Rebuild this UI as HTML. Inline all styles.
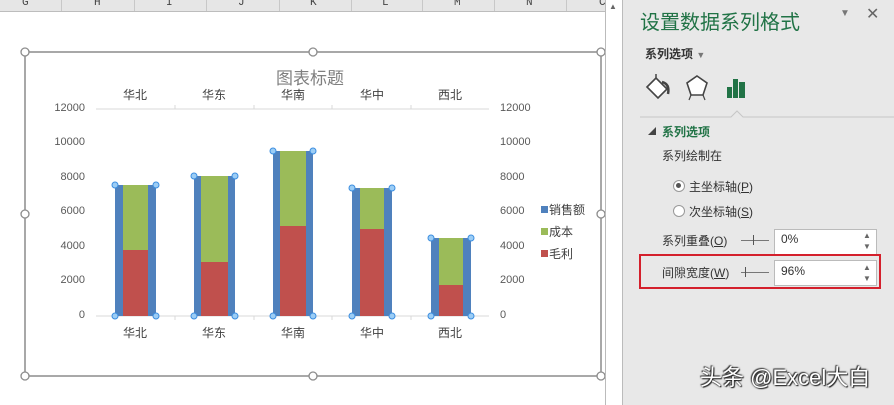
<!DOCTYPE html>
<html><head><meta charset="utf-8"><style>
body{margin:0;width:894px;height:405px;overflow:hidden;background:#fff;font-family:"Liberation Sans","Noto Sans CJK SC",sans-serif;position:relative}
.a{position:absolute;white-space:nowrap}
.hdr{position:absolute;left:0;top:0;width:605px;height:11px;background:#e6e6e6;border-bottom:1px solid #bdbdbd}
.col{position:absolute;top:-3px;font-size:11px;color:#444;font-family:"Liberation Mono",monospace}
.sep{position:absolute;top:0;width:1px;height:11px;background:#c8c8c8}
.ax{font-size:11px;color:#595959}
.cat{font-size:12px;color:#404040}
.pn{font-size:12px;color:#333}
</style></head><body>
<div class="hdr">
<div class="sep" style="left:61px"></div><div class="sep" style="left:134px"></div><div class="sep" style="left:206px"></div><div class="sep" style="left:279px"></div><div class="sep" style="left:351px"></div><div class="sep" style="left:422px"></div><div class="sep" style="left:494px"></div><div class="sep" style="left:566px"></div>
<span class="col" style="left:22px">G</span><span class="col" style="left:94px">H</span><span class="col" style="left:166px">I</span><span class="col" style="left:238px">J</span><span class="col" style="left:310px">K</span><span class="col" style="left:382px">L</span><span class="col" style="left:454px">M</span><span class="col" style="left:526px">N</span><span class="col" style="left:599px">C</span>
</div>
<div class="a" style="left:605px;top:0;width:16px;height:405px;background:#fff;border-left:1px solid #bbb;border-right:1px solid #bbb"></div>
<div class="a" style="left:609px;top:2px;font-size:8px;color:#666">▲</div>
<svg class="a" style="left:0;top:0" width="605" height="405">
<rect x="25" y="52" width="576" height="324" fill="none" stroke="#8c8c8c" stroke-width="1.5"/>
<g fill="#fff" stroke="#8c8c8c" stroke-width="1.3">
<circle cx="25" cy="52" r="4"/><circle cx="313" cy="52" r="4"/><circle cx="601" cy="52" r="4"/>
<circle cx="25" cy="214" r="4"/><circle cx="601" cy="214" r="4"/>
<circle cx="25" cy="376" r="4"/><circle cx="313" cy="376" r="4"/><circle cx="601" cy="376" r="4"/></g>
<line x1="96" y1="109" x2="489" y2="109" stroke="#d9d9d9"/>
<line x1="96" y1="316" x2="489" y2="316" stroke="#d9d9d9"/>
<g stroke="#d9d9d9"><line x1="175" y1="105" x2="175" y2="109"/><line x1="254" y1="105" x2="254" y2="109"/><line x1="332" y1="105" x2="332" y2="109"/><line x1="411" y1="105" x2="411" y2="109"/>
<line x1="175" y1="316" x2="175" y2="320"/><line x1="254" y1="316" x2="254" y2="320"/><line x1="332" y1="316" x2="332" y2="320"/><line x1="411" y1="316" x2="411" y2="320"/></g>
<g>
<rect x="115" y="185" width="41" height="131" fill="#4f81bd"/><rect x="123" y="185" width="25" height="65" fill="#9bbb59"/><rect x="123" y="250" width="25" height="66" fill="#c0504d"/>
<rect x="194" y="176" width="41" height="140" fill="#4f81bd"/><rect x="201" y="176" width="27" height="86" fill="#9bbb59"/><rect x="201" y="262" width="27" height="54" fill="#c0504d"/>
<rect x="273" y="151" width="40" height="165" fill="#4f81bd"/><rect x="280" y="151" width="26" height="75" fill="#9bbb59"/><rect x="280" y="226" width="26" height="90" fill="#c0504d"/>
<rect x="352" y="188" width="40" height="128" fill="#4f81bd"/><rect x="360" y="188" width="24" height="41" fill="#9bbb59"/><rect x="360" y="229" width="24" height="87" fill="#c0504d"/>
<rect x="431" y="238" width="40" height="78" fill="#4f81bd"/><rect x="439" y="238" width="24" height="47" fill="#9bbb59"/><rect x="439" y="285" width="24" height="31" fill="#c0504d"/>
</g>
<g fill="#9ccdf5" stroke="#3c8ee0" stroke-width="1">
<circle cx="115" cy="185" r="3"/><circle cx="156" cy="185" r="3"/><circle cx="115" cy="316" r="3"/><circle cx="156" cy="316" r="3"/>
<circle cx="194" cy="176" r="3"/><circle cx="235" cy="176" r="3"/><circle cx="194" cy="316" r="3"/><circle cx="235" cy="316" r="3"/>
<circle cx="273" cy="151" r="3"/><circle cx="313" cy="151" r="3"/><circle cx="273" cy="316" r="3"/><circle cx="313" cy="316" r="3"/>
<circle cx="352" cy="188" r="3"/><circle cx="392" cy="188" r="3"/><circle cx="352" cy="316" r="3"/><circle cx="392" cy="316" r="3"/>
<circle cx="431" cy="238" r="3"/><circle cx="471" cy="238" r="3"/><circle cx="431" cy="316" r="3"/><circle cx="471" cy="316" r="3"/>
</g>
<rect x="541" y="206" width="7" height="7" fill="#4f81bd"/><rect x="541" y="228" width="7" height="7" fill="#9bbb59"/><rect x="541" y="250" width="7" height="7" fill="#c0504d"/>
</svg>
<div class="a" style="left:276px;top:64px;font-size:17px;color:#7f7f7f">图表标题</div>
<div class="a cat" style="left:123px;top:86px">华北</div><div class="a cat" style="left:202px;top:86px">华东</div><div class="a cat" style="left:281px;top:86px">华南</div><div class="a cat" style="left:360px;top:86px">华中</div><div class="a cat" style="left:438px;top:86px">西北</div>
<div class="a cat" style="left:123px;top:324px">华北</div><div class="a cat" style="left:202px;top:324px">华东</div><div class="a cat" style="left:281px;top:324px">华南</div><div class="a cat" style="left:360px;top:324px">华中</div><div class="a cat" style="left:438px;top:324px">西北</div>
<div class="a ax" style="right:809px;top:102px">12000</div><div class="a ax" style="right:809px;top:136px">10000</div><div class="a ax" style="right:809px;top:171px">8000</div><div class="a ax" style="right:809px;top:205px">6000</div><div class="a ax" style="right:809px;top:240px">4000</div><div class="a ax" style="right:809px;top:274px">2000</div><div class="a ax" style="right:809px;top:309px">0</div>
<div class="a ax" style="left:500px;top:102px">12000</div><div class="a ax" style="left:500px;top:136px">10000</div><div class="a ax" style="left:500px;top:171px">8000</div><div class="a ax" style="left:500px;top:205px">6000</div><div class="a ax" style="left:500px;top:240px">4000</div><div class="a ax" style="left:500px;top:274px">2000</div><div class="a ax" style="left:500px;top:309px">0</div>
<div class="a cat" style="left:549px;top:201px">销售额</div><div class="a cat" style="left:549px;top:223px">成本</div><div class="a cat" style="left:549px;top:245px">毛利</div>
<div class="a" style="left:623px;top:0;width:271px;height:405px;background:#e8e8e8"></div>
<div class="a" style="left:640px;top:6px;font-size:20px;color:#217346">设置数据系列格式</div>
<div class="a" style="left:840px;top:8px;font-size:10px;color:#777">▼</div>
<div class="a" style="left:866px;top:4px;font-size:16px;color:#666">✕</div>
<div class="a" style="left:645px;top:45px;font-size:12px;font-weight:bold;color:#333">系列选项 <span style="font-size:9px;color:#777">▼</span></div>
<svg class="a" style="left:640px;top:70px" width="254" height="50">
<path d="M7 17 L16 8 L27 19 L18 28 Z" fill="#fff" stroke="#444" stroke-width="1.6"/>
<path d="M16 8 L16 4" stroke="#444" stroke-width="1.5"/><path d="M22 12 Q30 14 28 24" fill="none" stroke="#444" stroke-width="2.5"/>
<path d="M57 6 L67 13 L63 25 L51 25 L47 13 Z" fill="#fff" stroke="#444" stroke-width="1.6"/>
<path d="M51 25 L49 30 M63 25 L65 30" stroke="#444" stroke-width="1.2"/>
<rect x="87" y="17" width="5" height="11" fill="#217346"/><rect x="93" y="9" width="5" height="19" fill="#217346"/><rect x="99" y="12" width="6" height="16" fill="#217346"/>
<path d="M0 47 L91 47 L97 41 L103 47 L254 47" fill="none" stroke="#c6c6c6"/>
</svg>
<div class="a" style="left:648px;top:126px;font-size:8px;color:#444">◢</div>
<div class="a" style="left:662px;top:123px;font-size:12px;font-weight:bold;color:#217346">系列选项</div>
<div class="a pn" style="left:662px;top:147px">系列绘制在</div>
<div class="a" style="left:673px;top:180px;width:10px;height:10px;border-radius:50%;background:#fff;border:1px solid #999"></div>
<div class="a" style="left:676px;top:183px;width:5px;height:5px;border-radius:50%;background:#555"></div>
<div class="a pn" style="left:689px;top:178px">主坐标轴(<u>P</u>)</div>
<div class="a" style="left:673px;top:205px;width:10px;height:10px;border-radius:50%;background:#fff;border:1px solid #999"></div>
<div class="a pn" style="left:689px;top:203px">次坐标轴(<u>S</u>)</div>
<div class="a pn" style="left:662px;top:232px">系列重叠(<u>O</u>)</div>
<div class="a" style="left:741px;top:240px;width:28px;height:1px;background:#777"></div><div class="a" style="left:753px;top:235px;width:1px;height:10px;background:#555"></div>
<div class="a" style="left:774px;top:229px;width:101px;height:24px;background:#fff;border:1px solid #bbb"></div>
<div class="a pn" style="left:781px;top:232px">0%</div>
<div class="a" style="left:863px;top:230px;font-size:8px;color:#666;line-height:11px">▲<br>▼</div>
<div class="a" style="left:639px;top:254px;width:242px;height:35px;border:2px solid #d4202c;box-sizing:border-box"></div>
<div class="a pn" style="left:662px;top:264px">间隙宽度(<u>W</u>)</div>
<div class="a" style="left:741px;top:272px;width:28px;height:1px;background:#777"></div><div class="a" style="left:745px;top:267px;width:1px;height:10px;background:#555"></div>
<div class="a" style="left:774px;top:260px;width:101px;height:24px;background:#fff;border:1px solid #bbb"></div>
<div class="a pn" style="left:781px;top:264px">96%</div>
<div class="a" style="left:863px;top:262px;font-size:8px;color:#666;line-height:11px">▲<br>▼</div>
<div class="a" style="left:700px;top:360px;font-size:22px;color:#fff;text-shadow:0 0 2px #222,1px 1px 1px #222,-1px -1px 1px #444">头条 @Excel大白</div>
</body></html>
